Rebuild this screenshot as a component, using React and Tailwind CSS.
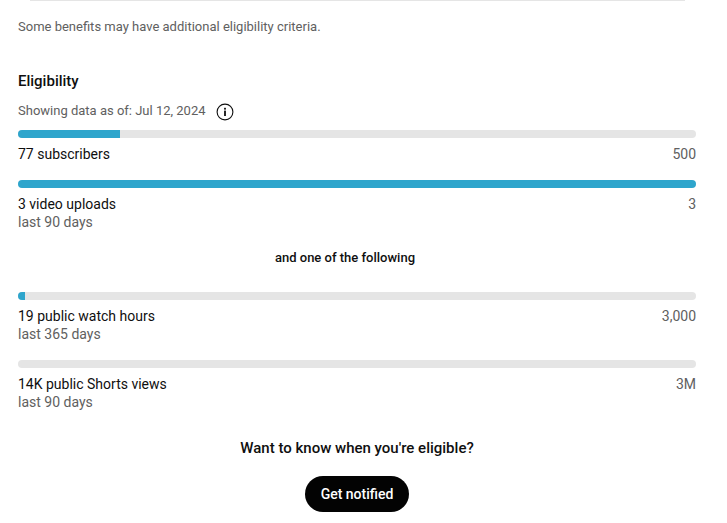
import React from 'react';

const fontStack = "font-['Roboto',sans-serif]";

const ProgressRow = ({ label, sub, target, percent }) => (
  <div>
    <div className="h-2 w-full rounded-full bg-[#e5e5e5] overflow-hidden">
      <div className="h-full bg-[#2ea5cc]" style={{ width: `${percent}%` }} />
    </div>
    <div className="mt-[7px] flex justify-between text-sm leading-[18px]">
      <span className="text-[#0f0f0f]">{label}</span>
      <span className="text-[#606060]">{target}</span>
    </div>
    {sub ? <div className="text-sm leading-[18px] text-[#606060]">{sub}</div> : null}
  </div>
);

const InfoIcon = () => (
  <svg width="18" height="18" viewBox="0 0 18 18" fill="none" className="ml-[10px] mt-[1px]">
    <circle cx="9" cy="9" r="7.9" stroke="#0f0f0f" strokeWidth="1.1" />
    <rect x="8.1" y="7.6" width="1.8" height="5.4" fill="#0f0f0f" />
    <rect x="8.1" y="4.8" width="1.8" height="1.8" fill="#0f0f0f" />
  </svg>
);

const App = () => {
  return (
    <div className={`${fontStack} w-[727px] h-[523px] overflow-hidden bg-white`}>
      <div className="ml-[30px] w-[655px] h-px bg-[#e5e5e5]" />
      <div className="px-[18px] w-[714px]">
        <p className="mt-[17px] text-[13px] leading-[18px] text-[#606060]">
          Some benefits may have additional eligibility criteria.
        </p>
        <h2 className="mt-[36px] text-[15px] leading-[18px] font-medium text-[#0f0f0f]">Eligibility</h2>
        <div className="mt-[12px] flex items-center h-[18px]">
          <span className="text-[13px] leading-[18px] text-[#606060]">Showing data as of: Jul 12, 2024</span>
          <InfoIcon />
        </div>
        <div className="mt-[10px]">
          <ProgressRow label="77 subscribers" target="500" percent={15} />
        </div>
        <div className="mt-[17px]">
          <ProgressRow label="3 video uploads" sub="last 90 days" target="3" percent={100} />
        </div>
        <p className="mt-[18px] w-[654px] text-center text-[13px] leading-[18px] font-medium text-[#0f0f0f]">and one of the following</p>
        <div className="mt-[25px]">
          <ProgressRow label="19 public watch hours" sub="last 365 days" target="3,000" percent={1} />
        </div>
        <div className="mt-[17px]">
          <ProgressRow label="14K public Shorts views" sub="last 90 days" target="3M" percent={0} />
        </div>
        <p className="mt-[27px] text-center text-[15px] leading-5 font-medium text-[#0f0f0f]">Want to know when you're eligible?</p>
        <div className="mt-[18px] flex justify-center">
          <button className="h-9 px-4 pb-px rounded-full bg-[#030303] text-sm font-medium text-white">Get notified</button>
        </div>
      </div>
    </div>
  );
};

export default App;
